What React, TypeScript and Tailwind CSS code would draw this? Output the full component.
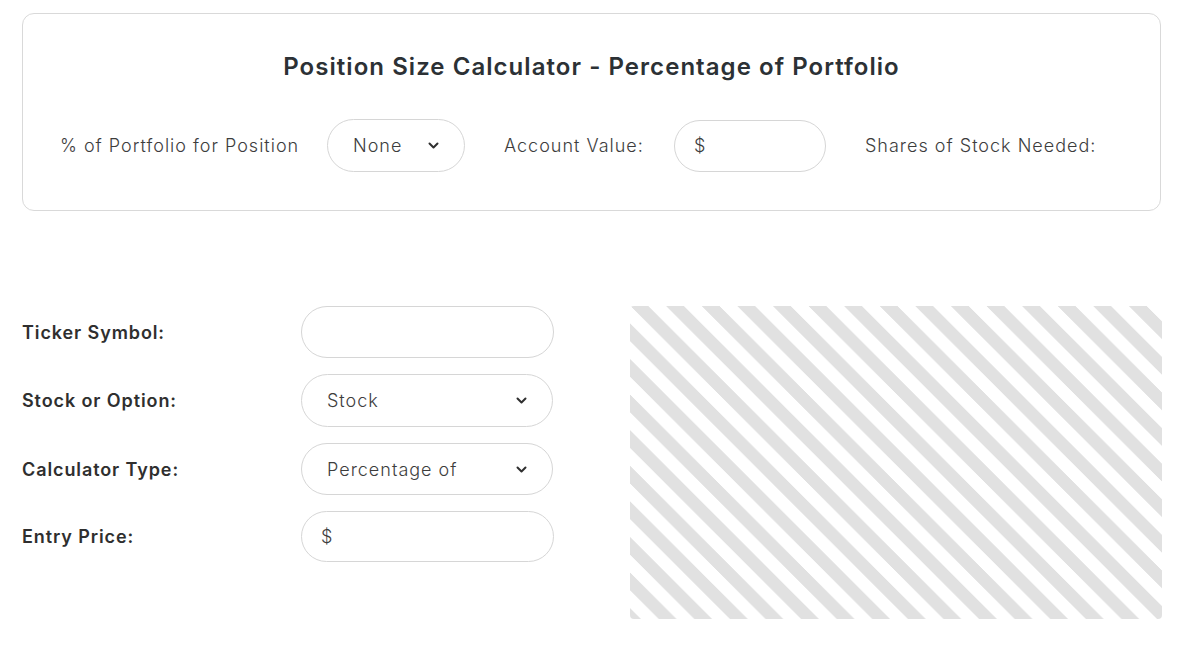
import React from 'react';

const font = { fontFamily: 'Inter, "Noto Sans", sans-serif' };

function Chevron() {
  return (
    <svg width="11" height="7" viewBox="0 0 11 7" fill="none" className="shrink-0">
      <path d="M1.5 1.5l4 4 4-4" stroke="#2f2f2f" strokeWidth="2" strokeLinecap="round" strokeLinejoin="round" />
    </svg>
  );
}

function Select({ value, className }: { value: string; className: string }) {
  return (
    <div className={`flex items-center justify-between rounded-full border border-[#d6d6d6] bg-white pl-[25px] pr-[25px] ${className}`}>
      <span className="text-[18px] font-light tracking-[1px] text-[#3d3d3d]">{value}</span>
      <Chevron />
    </div>
  );
}

function TextBox({ prefix, className }: { prefix?: string; className: string }) {
  return (
    <div className={`flex items-center rounded-full border border-[#d6d6d6] bg-white pl-[19px] ${className}`}>
      {prefix && <span className="text-[18px] font-light text-[#3d3d3d]">{prefix}</span>}
    </div>
  );
}

const rows = [
  { label: 'Ticker Symbol:', kind: 'input', h: 'h-[52px]' },
  { label: 'Stock or Option:', kind: 'select', value: 'Stock', h: 'h-[53px]' },
  { label: 'Calculator Type:', kind: 'select', value: 'Percentage of', h: 'h-[52px]' },
  { label: 'Entry Price:', kind: 'input', prefix: '$', h: 'h-[51px]' },
];

export default function App() {
  return (
    <div className="w-[1182px] h-[646px] bg-white pl-[22px] pr-[20px] pt-[13px]" style={font}>
      <div className="h-[198px] w-[1139px] rounded-[12px] border border-[#d9d9d9] flex flex-col items-center">
        <h2 className="mt-[37px] h-[32px] leading-[32px] text-[24px] font-semibold tracking-[1.05px] text-[#2c3135] whitespace-nowrap">
          Position Size Calculator - Percentage of Portfolio
        </h2>
        <div className="mt-[36px] w-full flex items-center pl-[37px] text-[18px] font-light tracking-[1px] text-[#3d3d3d]">
          <div className="w-[267px] whitespace-nowrap">% of Portfolio for Position</div>
          <Select value="None" className="w-[138px] h-[53px]" />
          <div className="ml-[39px] w-[170px] whitespace-nowrap">Account Value:</div>
          <TextBox prefix="$" className="w-[152px] h-[52px]" />
          <div className="ml-[39px] whitespace-nowrap">Shares of Stock Needed:</div>
        </div>
      </div>

      <div className="mt-[95px] flex items-start">
        <div className="w-[532px] flex flex-col gap-[16px]">
          {rows.map((r) => (
            <div key={r.label} className="flex items-center">
              <div className="w-[279px] text-[18px] font-semibold tracking-[0.9px] text-[#2f2f2f] whitespace-nowrap">{r.label}</div>
              {r.kind === 'select' ? (
                <Select value={r.value as string} className={`w-[252px] ${r.h}`} />
              ) : (
                <TextBox prefix={r.prefix} className={`w-[253px] ${r.h}`} />
              )}
            </div>
          ))}
        </div>
        <div className="ml-[76px] w-[532px] h-[313px] rounded-[4px] bg-[linear-gradient(45deg,#e1e1e1_25%,#ffffff_25%,#ffffff_50%,#e1e1e1_50%,#e1e1e1_75%,#ffffff_75%,#ffffff)] bg-[length:35.6px_35.6px]" />
      </div>
    </div>
  );
}
